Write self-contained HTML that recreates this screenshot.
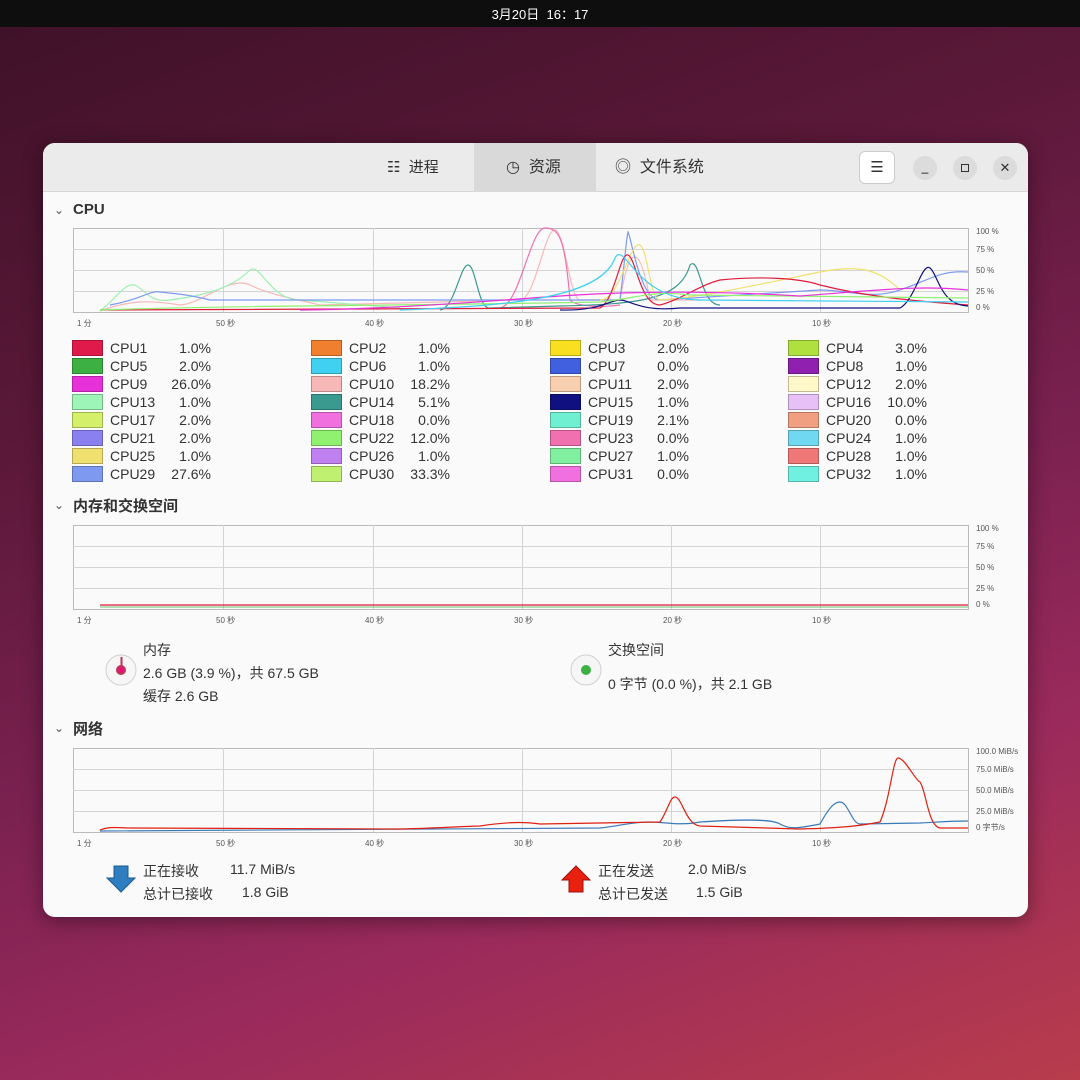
<!DOCTYPE html>
<html><head><meta charset="utf-8"><style>
*{margin:0;padding:0;box-sizing:border-box}
body{width:1080px;height:1080px;overflow:hidden;position:relative;font-family:"Liberation Sans","Noto Sans CJK SC",sans-serif;
background:linear-gradient(160deg,#3e1128 0%,#5a1838 30%,#7a2150 55%,#9a2a5c 75%,#b83c4c 100%);}
.top{position:absolute;left:0;top:0;width:1080px;height:27px;background:#0e0e0e;color:#fff;font-size:13px;text-align:center;line-height:30px}
.win{position:absolute;left:43px;top:143px;width:985px;height:774px;background:#fafafa;border-radius:12px;overflow:hidden;box-shadow:0 4px 20px rgba(0,0,0,.4)}
.hdr{position:absolute;left:0;top:0;width:985px;height:49px;background:#ebebeb;border-bottom:1px solid #d6d6d6}
.tab{position:absolute;top:0;height:49px;line-height:50px;font-size:16px;color:#333}
.sec{position:absolute;font-size:15px;font-weight:bold;color:#333}
.chev{position:absolute;font-size:12px;color:#555}
.lg{position:absolute;font-size:14px;color:#333;height:18px;line-height:18px}
.sw{position:absolute;width:31px;height:16px;border:1px solid rgba(0,0,0,.25);top:1px}
.t{position:absolute;font-size:14px;color:#333}
.ax{position:absolute;font-size:8px;color:#555}
</style></head><body>
<div class="top">3月20日 &nbsp;16：17</div>
<div class="win">
 <div class="hdr">
  <div class="tab" style="left:344px;font-size:15px">☷&nbsp;&nbsp;进程</div>
  <div class="tab" style="left:431px;width:122px;background:#d9d9d9;padding-left:32px">&#9719;&nbsp;&nbsp;资源</div>
  <div class="tab" style="left:572px">&#9678;&nbsp;&nbsp;文件系统</div>
  <div style="position:absolute;left:816px;top:8px;width:36px;height:33px;background:#fff;border:1px solid #ccc;border-radius:6px;text-align:center;line-height:31px;font-size:15px;color:#333">☰</div>
  <div style="position:absolute;left:870px;top:13px;width:24px;height:24px;border-radius:12px;background:#dcdcdc;text-align:center;font-size:12px;line-height:22px">_</div>
  <div style="position:absolute;left:910px;top:13px;width:24px;height:24px;border-radius:12px;background:#dcdcdc"><div style="position:absolute;left:8px;top:8px;width:8px;height:8px;border:1px solid #333"></div></div>
  <div style="position:absolute;left:950px;top:13px;width:24px;height:24px;border-radius:12px;background:#dcdcdc;text-align:center;font-size:13px;line-height:24px;color:#333">✕</div>
 </div>
</div>
<div class="chev" style="left:54px;top:203px">&#8964;</div><div class="sec" style="left:73px;top:201px">CPU</div>
<div class="chev" style="left:54px;top:498px">&#8964;</div><div class="sec" style="left:73px;top:495px">内存和交换空间</div>
<div class="chev" style="left:54px;top:721px">&#8964;</div><div class="sec" style="left:73px;top:718px">网络</div>

<svg style="position:absolute;left:0;top:0" width="1080" height="1080">
 <g stroke="#d4d4d4" stroke-width="1" fill="none">
  <rect x="73.5" y="228.5" width="895" height="84" stroke="#bbb"/>
  <path d="M223.5 228v84M373.5 228v84M522.5 228v84M671.5 228v84M820.5 228v84M73 249.5h895M73 270.5h895M73 291.5h895"/>
  <rect x="73.5" y="525.5" width="895" height="84" stroke="#bbb"/>
  <path d="M223.5 525v84M373.5 525v84M522.5 525v84M671.5 525v84M820.5 525v84M73 546.5h895M73 567.5h895M73 588.5h895"/>
  <rect x="73.5" y="748.5" width="895" height="84" stroke="#bbb"/>
  <path d="M223.5 748v84M373.5 748v84M522.5 748v84M671.5 748v84M820.5 748v84M73 769.5h895M73 790.5h895M73 811.5h895"/>
 </g>
 <g fill="none" stroke-width="1.2">
  <path stroke="#f8b8b8" d="M100 311 C130 300,150 300,180 305 C200 305,230 275,250 285 C270 295,300 300,320 305 L520 300 C535 300,545 228,555 230 C565 232,570 300,580 300 L620 300 C630 240,640 245,650 300 L700 300"/>
  <path stroke="#f070b0" d="M500 308 C520 305,530 228,545 228 C560 228,565 240,570 300 C575 306,600 308,620 305"/>
  <path stroke="#a0f0b0" d="M100 311 C115 300,125 282,135 285 C145 290,150 303,170 300 C200 296,230 290,250 270 C260 262,270 300,300 300 L400 308"/>
  <path stroke="#3a9a90" d="M440 310 C455 308,460 265,468 265 C476 265,478 310,490 308 L560 306 C640 304,680 300,690 265 C700 255,700 305,720 305"/>
  <path stroke="#7e9af0" d="M110 305 C140 300,150 290,160 292 C180 294,190 295,210 300 L620 300 C625 260,626 240,628 232 C632 240,640 300,660 300 L820 290 C850 290,870 300,900 290 C930 280,940 270,968 272"/>
  <path stroke="#f0e070" d="M600 300 C620 300,630 240,640 245 C648 250,650 300,660 300 C700 298,780 280,820 272 C860 264,880 270,900 290"/>
  <path stroke="#e01b3c" d="M100 310 L600 308 C615 300,620 252,628 255 C636 258,640 305,660 305 C680 300,700 285,720 280 C760 276,800 278,820 285 C860 295,900 300,968 305"/>
  <path stroke="#101080" d="M560 310 C600 311,610 300,620 300 C630 300,640 312,680 308 L900 308 C915 300,922 262,930 268 C938 274,940 305,968 306"/>
  <path stroke="#90f070" d="M100 310 C250 305,400 306,600 302 C640 298,650 290,690 295 L968 298"/>
  <path stroke="#e830d8" d="M300 310 C400 309,500 300,560 296 C620 292,700 290,800 296 C880 290,920 285,968 290"/>
  <path stroke="#40d0f0" d="M400 310 C500 306,600 300,615 258 C625 240,635 300,700 300 L968 302"/>
 </g>
 <g fill="none" stroke-width="1.2">
  <path stroke="#e01b3c" d="M100 605 H968"/>
  <path stroke="#3cb043" d="M100 607 H968" stroke-width="0.8"/>
 </g>
 <g fill="none" stroke-width="1.2">
  <path stroke="#3a7ab8" d="M100 831 C300 831,500 830,600 828 C620 826,630 822,650 822 C665 822,680 826,700 822 C730 820,770 818,780 824 C790 830,800 828,820 824 C830 806,835 802,840 802 C848 802,852 824,860 824 L920 823 C940 822,950 821,968 821"/>
  <path stroke="#e02010" d="M100 830 C110 826,120 828,130 828 L400 829 C440 828,470 826,480 826 C500 823,520 821,540 824 L660 822 C668 810,670 797,675 797 C682 797,686 825,700 826 L800 829 C840 828,860 826,880 822 C890 800,893 758,898 758 C905 758,915 780,920 782 C926 790,928 826,940 828 L968 828"/>
 </g>
</svg>

<div class="ax" style="left:976px;top:227px">100 %</div><div class="ax" style="left:976px;top:245px">75 %</div><div class="ax" style="left:976px;top:266px">50 %</div><div class="ax" style="left:976px;top:287px">25 %</div><div class="ax" style="left:976px;top:303px">0 %</div>
<div class="ax" style="left:77px;top:318px">1 分</div><div class="ax" style="left:216px;top:318px">50 秒</div><div class="ax" style="left:365px;top:318px">40 秒</div><div class="ax" style="left:514px;top:318px">30 秒</div><div class="ax" style="left:663px;top:318px">20 秒</div><div class="ax" style="left:812px;top:318px">10 秒</div>
<div class="ax" style="left:976px;top:524px">100 %</div><div class="ax" style="left:976px;top:542px">75 %</div><div class="ax" style="left:976px;top:563px">50 %</div><div class="ax" style="left:976px;top:584px">25 %</div><div class="ax" style="left:976px;top:600px">0 %</div>
<div class="ax" style="left:77px;top:615px">1 分</div><div class="ax" style="left:216px;top:615px">50 秒</div><div class="ax" style="left:365px;top:615px">40 秒</div><div class="ax" style="left:514px;top:615px">30 秒</div><div class="ax" style="left:663px;top:615px">20 秒</div><div class="ax" style="left:812px;top:615px">10 秒</div>
<div class="ax" style="left:976px;top:747px">100.0 MiB/s</div><div class="ax" style="left:976px;top:765px">75.0 MiB/s</div><div class="ax" style="left:976px;top:786px">50.0 MiB/s</div><div class="ax" style="left:976px;top:807px">25.0 MiB/s</div><div class="ax" style="left:976px;top:822px">0 字节/s</div>
<div class="ax" style="left:77px;top:838px">1 分</div><div class="ax" style="left:216px;top:838px">50 秒</div><div class="ax" style="left:365px;top:838px">40 秒</div><div class="ax" style="left:514px;top:838px">30 秒</div><div class="ax" style="left:663px;top:838px">20 秒</div><div class="ax" style="left:812px;top:838px">10 秒</div>

<div class="lg" style="left:72px;top:339px"><div class="sw" style="left:0;background:#e01b4c"></div><span style="position:absolute;left:38px">CPU1</span><span style="position:absolute;left:90px;width:49px;text-align:right">1.0%</span></div>
<div class="lg" style="left:72px;top:357px"><div class="sw" style="left:0;background:#3cb043"></div><span style="position:absolute;left:38px">CPU5</span><span style="position:absolute;left:90px;width:49px;text-align:right">2.0%</span></div>
<div class="lg" style="left:72px;top:375px"><div class="sw" style="left:0;background:#e830d8"></div><span style="position:absolute;left:38px">CPU9</span><span style="position:absolute;left:90px;width:49px;text-align:right">26.0%</span></div>
<div class="lg" style="left:72px;top:393px"><div class="sw" style="left:0;background:#9ef5b8"></div><span style="position:absolute;left:38px">CPU13</span><span style="position:absolute;left:90px;width:49px;text-align:right">1.0%</span></div>
<div class="lg" style="left:72px;top:411px"><div class="sw" style="left:0;background:#d4f06a"></div><span style="position:absolute;left:38px">CPU17</span><span style="position:absolute;left:90px;width:49px;text-align:right">2.0%</span></div>
<div class="lg" style="left:72px;top:429px"><div class="sw" style="left:0;background:#8a80f0"></div><span style="position:absolute;left:38px">CPU21</span><span style="position:absolute;left:90px;width:49px;text-align:right">2.0%</span></div>
<div class="lg" style="left:72px;top:447px"><div class="sw" style="left:0;background:#f0e070"></div><span style="position:absolute;left:38px">CPU25</span><span style="position:absolute;left:90px;width:49px;text-align:right">1.0%</span></div>
<div class="lg" style="left:72px;top:465px"><div class="sw" style="left:0;background:#7e9af0"></div><span style="position:absolute;left:38px">CPU29</span><span style="position:absolute;left:90px;width:49px;text-align:right">27.6%</span></div>

<div class="lg" style="left:311px;top:339px"><div class="sw" style="left:0;background:#f08030"></div><span style="position:absolute;left:38px">CPU2</span><span style="position:absolute;left:90px;width:49px;text-align:right">1.0%</span></div>
<div class="lg" style="left:311px;top:357px"><div class="sw" style="left:0;background:#40d0f0"></div><span style="position:absolute;left:38px">CPU6</span><span style="position:absolute;left:90px;width:49px;text-align:right">1.0%</span></div>
<div class="lg" style="left:311px;top:375px"><div class="sw" style="left:0;background:#f8b8b8"></div><span style="position:absolute;left:38px">CPU10</span><span style="position:absolute;left:90px;width:49px;text-align:right">18.2%</span></div>
<div class="lg" style="left:311px;top:393px"><div class="sw" style="left:0;background:#3a9a90"></div><span style="position:absolute;left:38px">CPU14</span><span style="position:absolute;left:90px;width:49px;text-align:right">5.1%</span></div>
<div class="lg" style="left:311px;top:411px"><div class="sw" style="left:0;background:#f070e0"></div><span style="position:absolute;left:38px">CPU18</span><span style="position:absolute;left:90px;width:49px;text-align:right">0.0%</span></div>
<div class="lg" style="left:311px;top:429px"><div class="sw" style="left:0;background:#90f070"></div><span style="position:absolute;left:38px">CPU22</span><span style="position:absolute;left:90px;width:49px;text-align:right">12.0%</span></div>
<div class="lg" style="left:311px;top:447px"><div class="sw" style="left:0;background:#c080f0"></div><span style="position:absolute;left:38px">CPU26</span><span style="position:absolute;left:90px;width:49px;text-align:right">1.0%</span></div>
<div class="lg" style="left:311px;top:465px"><div class="sw" style="left:0;background:#c0f070"></div><span style="position:absolute;left:38px">CPU30</span><span style="position:absolute;left:90px;width:49px;text-align:right">33.3%</span></div>

<div class="lg" style="left:550px;top:339px"><div class="sw" style="left:0;background:#f8e020"></div><span style="position:absolute;left:38px">CPU3</span><span style="position:absolute;left:90px;width:49px;text-align:right">2.0%</span></div>
<div class="lg" style="left:550px;top:357px"><div class="sw" style="left:0;background:#4060e0"></div><span style="position:absolute;left:38px">CPU7</span><span style="position:absolute;left:90px;width:49px;text-align:right">0.0%</span></div>
<div class="lg" style="left:550px;top:375px"><div class="sw" style="left:0;background:#f8d0b0"></div><span style="position:absolute;left:38px">CPU11</span><span style="position:absolute;left:90px;width:49px;text-align:right">2.0%</span></div>
<div class="lg" style="left:550px;top:393px"><div class="sw" style="left:0;background:#101080"></div><span style="position:absolute;left:38px">CPU15</span><span style="position:absolute;left:90px;width:49px;text-align:right">1.0%</span></div>
<div class="lg" style="left:550px;top:411px"><div class="sw" style="left:0;background:#70f0d0"></div><span style="position:absolute;left:38px">CPU19</span><span style="position:absolute;left:90px;width:49px;text-align:right">2.1%</span></div>
<div class="lg" style="left:550px;top:429px"><div class="sw" style="left:0;background:#f070b0"></div><span style="position:absolute;left:38px">CPU23</span><span style="position:absolute;left:90px;width:49px;text-align:right">0.0%</span></div>
<div class="lg" style="left:550px;top:447px"><div class="sw" style="left:0;background:#80f0a0"></div><span style="position:absolute;left:38px">CPU27</span><span style="position:absolute;left:90px;width:49px;text-align:right">1.0%</span></div>
<div class="lg" style="left:550px;top:465px"><div class="sw" style="left:0;background:#f070e0"></div><span style="position:absolute;left:38px">CPU31</span><span style="position:absolute;left:90px;width:49px;text-align:right">0.0%</span></div>

<div class="lg" style="left:788px;top:339px"><div class="sw" style="left:0;background:#b0e040"></div><span style="position:absolute;left:38px">CPU4</span><span style="position:absolute;left:90px;width:49px;text-align:right">3.0%</span></div>
<div class="lg" style="left:788px;top:357px"><div class="sw" style="left:0;background:#9020b0"></div><span style="position:absolute;left:38px">CPU8</span><span style="position:absolute;left:90px;width:49px;text-align:right">1.0%</span></div>
<div class="lg" style="left:788px;top:375px"><div class="sw" style="left:0;background:#fff8c8"></div><span style="position:absolute;left:38px">CPU12</span><span style="position:absolute;left:90px;width:49px;text-align:right">2.0%</span></div>
<div class="lg" style="left:788px;top:393px"><div class="sw" style="left:0;background:#e8c0f8"></div><span style="position:absolute;left:38px">CPU16</span><span style="position:absolute;left:90px;width:49px;text-align:right">10.0%</span></div>
<div class="lg" style="left:788px;top:411px"><div class="sw" style="left:0;background:#f0a080"></div><span style="position:absolute;left:38px">CPU20</span><span style="position:absolute;left:90px;width:49px;text-align:right">0.0%</span></div>
<div class="lg" style="left:788px;top:429px"><div class="sw" style="left:0;background:#70d8f0"></div><span style="position:absolute;left:38px">CPU24</span><span style="position:absolute;left:90px;width:49px;text-align:right">1.0%</span></div>
<div class="lg" style="left:788px;top:447px"><div class="sw" style="left:0;background:#f07878"></div><span style="position:absolute;left:38px">CPU28</span><span style="position:absolute;left:90px;width:49px;text-align:right">1.0%</span></div>
<div class="lg" style="left:788px;top:465px"><div class="sw" style="left:0;background:#70f0e0"></div><span style="position:absolute;left:38px">CPU32</span><span style="position:absolute;left:90px;width:49px;text-align:right">1.0%</span></div>

<svg style="position:absolute;left:105px;top:654px" width="32" height="32"><circle cx="16" cy="16" r="15" fill="#f6f6f6" stroke="#d0d0d0"/><circle cx="16" cy="16" r="5" fill="#c0305a"/><circle cx="16" cy="16" r="2" fill="#f08"/><rect x="15.5" y="3" width="2" height="10" fill="#c0305a"/></svg>
<div class="t" style="left:143px;top:640px">内存</div>
<div class="t" style="left:143px;top:663px">2.6 GB (3.9 %)，共 67.5 GB</div>
<div class="t" style="left:143px;top:686px">缓存 2.6 GB</div>
<svg style="position:absolute;left:570px;top:654px" width="32" height="32"><circle cx="16" cy="16" r="15" fill="#f6f6f6" stroke="#d0d0d0"/><circle cx="16" cy="16" r="5" fill="#3cb043"/></svg>
<div class="t" style="left:608px;top:640px">交换空间</div>
<div class="t" style="left:608px;top:674px">0 字节 (0.0 %)，共 2.1 GB</div>

<svg style="position:absolute;left:105px;top:864px" width="32" height="32"><path d="M9 2h14v12h7L16 28 2 14h7z" fill="#2f7fc0" stroke="#1a5a90"/></svg>
<div class="t" style="left:143px;top:861px">正在接收</div><div class="t" style="left:230px;top:861px">11.7 MiB/s</div>
<div class="t" style="left:143px;top:884px">总计已接收</div><div class="t" style="left:242px;top:884px">1.8 GiB</div>
<svg style="position:absolute;left:560px;top:864px" width="32" height="32"><path d="M16 2 30 16h-7v12H9V16H2z" fill="#e82010" stroke="#a01008"/></svg>
<div class="t" style="left:598px;top:861px">正在发送</div><div class="t" style="left:688px;top:861px">2.0 MiB/s</div>
<div class="t" style="left:598px;top:884px">总计已发送</div><div class="t" style="left:696px;top:884px">1.5 GiB</div>
</body></html>
